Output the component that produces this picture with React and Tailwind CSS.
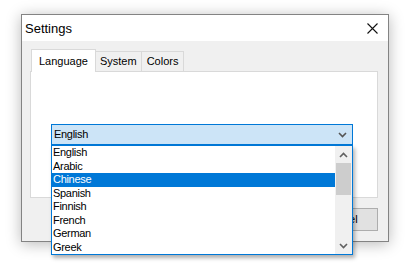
import React from 'react';

const languages = ['English', 'Arabic', 'Chinese', 'Spanish', 'Finnish', 'French', 'German', 'Greek'];

const Chevron = ({ up, className }) => (
    <svg width="9" height="6" viewBox="0 0 9 6" className={className}>
        <path
            d={up ? 'M1 5 L4.5 1.5 L8 5' : 'M1 1 L4.5 4.5 L8 1'}
            fill="none"
            stroke="currentColor"
            strokeWidth="1.6"
        />
    </svg>
);

const App = () => {
    return (
        <div className="w-[410px] h-[277px] bg-white pt-[14px] pl-[21px] overflow-hidden font-['Liberation_Sans',Arial,sans-serif] text-black">
            <div className="w-[368px] h-[228px] border border-[#838383] bg-[#f0f0f0] flex flex-col shadow-[0_2px_14px_rgba(0,0,0,0.28)]">
                {/* title bar */}
                <div className="h-[26px] bg-white flex items-center justify-between pl-[3px] pr-[10px]">
                    <span className="text-[13px] leading-none">Settings</span>
                    <svg width="11" height="11" viewBox="0 0 11 11">
                        <path d="M0.5 0.5 L10.5 10.5 M10.5 0.5 L0.5 10.5" stroke="#111" strokeWidth="1.1" />
                    </svg>
                </div>

                <div className="flex-1 pl-[8px] pr-[10px] pt-[8px] pb-[10px] flex flex-col">
                    {/* tabs */}
                    <div className="flex items-end h-[22px] pl-[1px] text-[11px] relative z-10">
                        <div className="h-[23px] -mb-[1px] px-[7px] bg-white border border-[#d9d9d9] border-b-0 flex items-center">
                            Language
                        </div>
                        <div className="h-[20px] px-[4px] bg-[#f0f0f0] border border-[#d9d9d9] border-l-0 border-b-0 flex items-center">
                            System
                        </div>
                        <div className="h-[20px] px-[5px] bg-[#f0f0f0] border border-[#d9d9d9] border-l-0 border-b-0 flex items-center">
                            Colors
                        </div>
                    </div>

                    {/* panel */}
                    <div className="h-[127px] bg-white border border-[#d9d9d9] pl-[20px] pr-[24px] pt-[52px]">
                        <div className="relative z-20">
                            <div className="h-[21px] border border-[#0078d7] bg-[#cce4f7] flex items-center justify-between pl-[2px] pr-[5px] text-[11px] tracking-[-0.3px]">
                                <span>English</span>
                                <Chevron className="text-[#555]" />
                            </div>
                            <div className="absolute left-0 top-full w-[302px] h-[110px] bg-white border border-[#0078d7] flex shadow-[2px_3px_4px_rgba(0,0,0,0.3)]">
                                <div className="flex-1 flex flex-col">
                                    {languages.map((lang) => (
                                        <div
                                            key={lang}
                                            className={
                                                lang === 'Chinese'
                                                    ? 'h-[13.5px] leading-[13.5px] pl-[1px] text-[11px] tracking-[-0.3px] bg-[#0078d7] text-white'
                                                    : 'h-[13.5px] leading-[13.5px] pl-[1px] text-[11px] tracking-[-0.3px]'
                                            }
                                        >
                                            {lang}
                                        </div>
                                    ))}
                                </div>
                                <div className="w-[17px] bg-[#f0f0f0] flex flex-col items-center">
                                    <div className="h-[17px] flex items-center justify-center text-[#606060]">
                                        <Chevron up />
                                    </div>
                                    <div className="w-[15px] h-[32px] bg-[#cdcdcd]" />
                                    <div className="flex-1" />
                                    <div className="h-[17px] flex items-center justify-center text-[#606060]">
                                        <Chevron />
                                    </div>
                                </div>
                            </div>
                        </div>
                    </div>

                    {/* buttons */}
                    <div className="mt-[10px] flex justify-end">
                        <button className="w-[75px] h-[23px] bg-[#e1e1e1] border border-[#adadad] text-[11px]">
                            Cancel
                        </button>
                    </div>
                </div>
            </div>
        </div>
    );
};

export default App;
